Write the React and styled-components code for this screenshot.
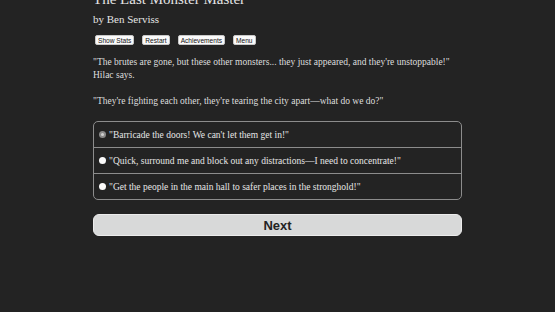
import React from 'react';
import styled, { createGlobalStyle } from 'styled-components';

const GlobalStyle = createGlobalStyle`
  html, body {
    margin: 0;
    padding: 0;
    background: #232323;
  }
  body {
    font-family: "Liberation Serif", "DejaVu Serif", serif;
    color: #dedede;
  }
`;

const Page = styled.div`
  width: 369px;
  margin: 0 auto;
`;

const Header = styled.header`
  margin-top: -10px;
`;

const Title = styled.h1`
  margin: 0;
  font-size: 15px;
  font-weight: normal;
  line-height: 18px;
  color: #e4e4e4;
`;

const Author = styled.h2`
  margin: 4px 0 0;
  font-size: 11px;
  font-weight: normal;
  line-height: 14px;
  color: #e4e4e4;
`;

const ButtonBar = styled.div`
  display: flex;
  gap: 8px;
  margin: 9px 0 0 2px;
`;

const SmallButton = styled.button`
  font-family: "Liberation Sans", Arial, sans-serif;
  font-size: 6.6px;
  line-height: 7px;
  height: 10px;
  padding: 0 2px;
  background: #fafafa;
  color: #111;
  border: 1px solid #c8c8c8;
  border-radius: 2px;
  cursor: pointer;
`;

const Text = styled.div`
  margin-top: 11px;
  font-size: 9.5px;
  line-height: 13px;

  p {
    margin: 0 0 13px;
  }
`;

const Choices = styled.form`
  margin-top: 8px;
  border: 1px solid #8c8c8c;
  border-radius: 5px;
  overflow: hidden;
`;

const Choice = styled.label`
  display: flex;
  align-items: center;
  gap: 3px;
  height: 25px;
  padding: 0 5px;
  font-size: 9.5px;
  color: #e6e6e6;
  border-top: ${(p) => (p.$first ? 'none' : '1px solid #8c8c8c')};
  cursor: pointer;
`;

const Radio = styled.span`
  width: 7px;
  height: 7px;
  border-radius: 50%;
  flex: none;
  background: ${(p) => (p.$checked ? '#8a8a8a' : '#fafafa')};
  position: relative;

  &::after {
    content: '';
    display: ${(p) => (p.$checked ? 'block' : 'none')};
    position: absolute;
    inset: 2px;
    border-radius: 50%;
    background: #cfcfcf;
  }
`;

const NextButton = styled.button`
  display: block;
  width: 100%;
  height: 22px;
  margin-top: 14px;
  background: #d8d9d9;
  border: 1px solid #ececec;
  border-radius: 6px;
  font-family: "Liberation Sans", Arial, sans-serif;
  font-weight: bold;
  font-size: 13px;
  color: #232323;
  padding: 0;
  cursor: pointer;
`;

const options = [
  '"Barricade the doors! We can\'t let them get in!"',
  '"Quick, surround me and block out any distractions\u2014I need to concentrate!"',
  '"Get the people in the main hall to safer places in the stronghold!"',
];

export default function App() {
  return (
    <>
      <GlobalStyle />
      <Page>
        <Header>
          <Title>The Last Monster Master</Title>
          <Author>by Ben Serviss</Author>
        </Header>
        <ButtonBar>
          <SmallButton>Show Stats</SmallButton>
          <SmallButton>Restart</SmallButton>
          <SmallButton>Achievements</SmallButton>
          <SmallButton>Menu</SmallButton>
        </ButtonBar>
        <Text>
          <p>
            "The brutes are gone, but these other monsters... they just appeared, and they're
            unstoppable!" Hilac says.
          </p>
          <p>"They're fighting each other, they're tearing the city apart—what do we do?"</p>
        </Text>
        <Choices>
          {options.map((o, i) => (
            <Choice key={i} $first={i === 0}>
              <Radio $checked={i === 0} />
              {o}
            </Choice>
          ))}
        </Choices>
        <NextButton>Next</NextButton>
      </Page>
    </>
  );
}
